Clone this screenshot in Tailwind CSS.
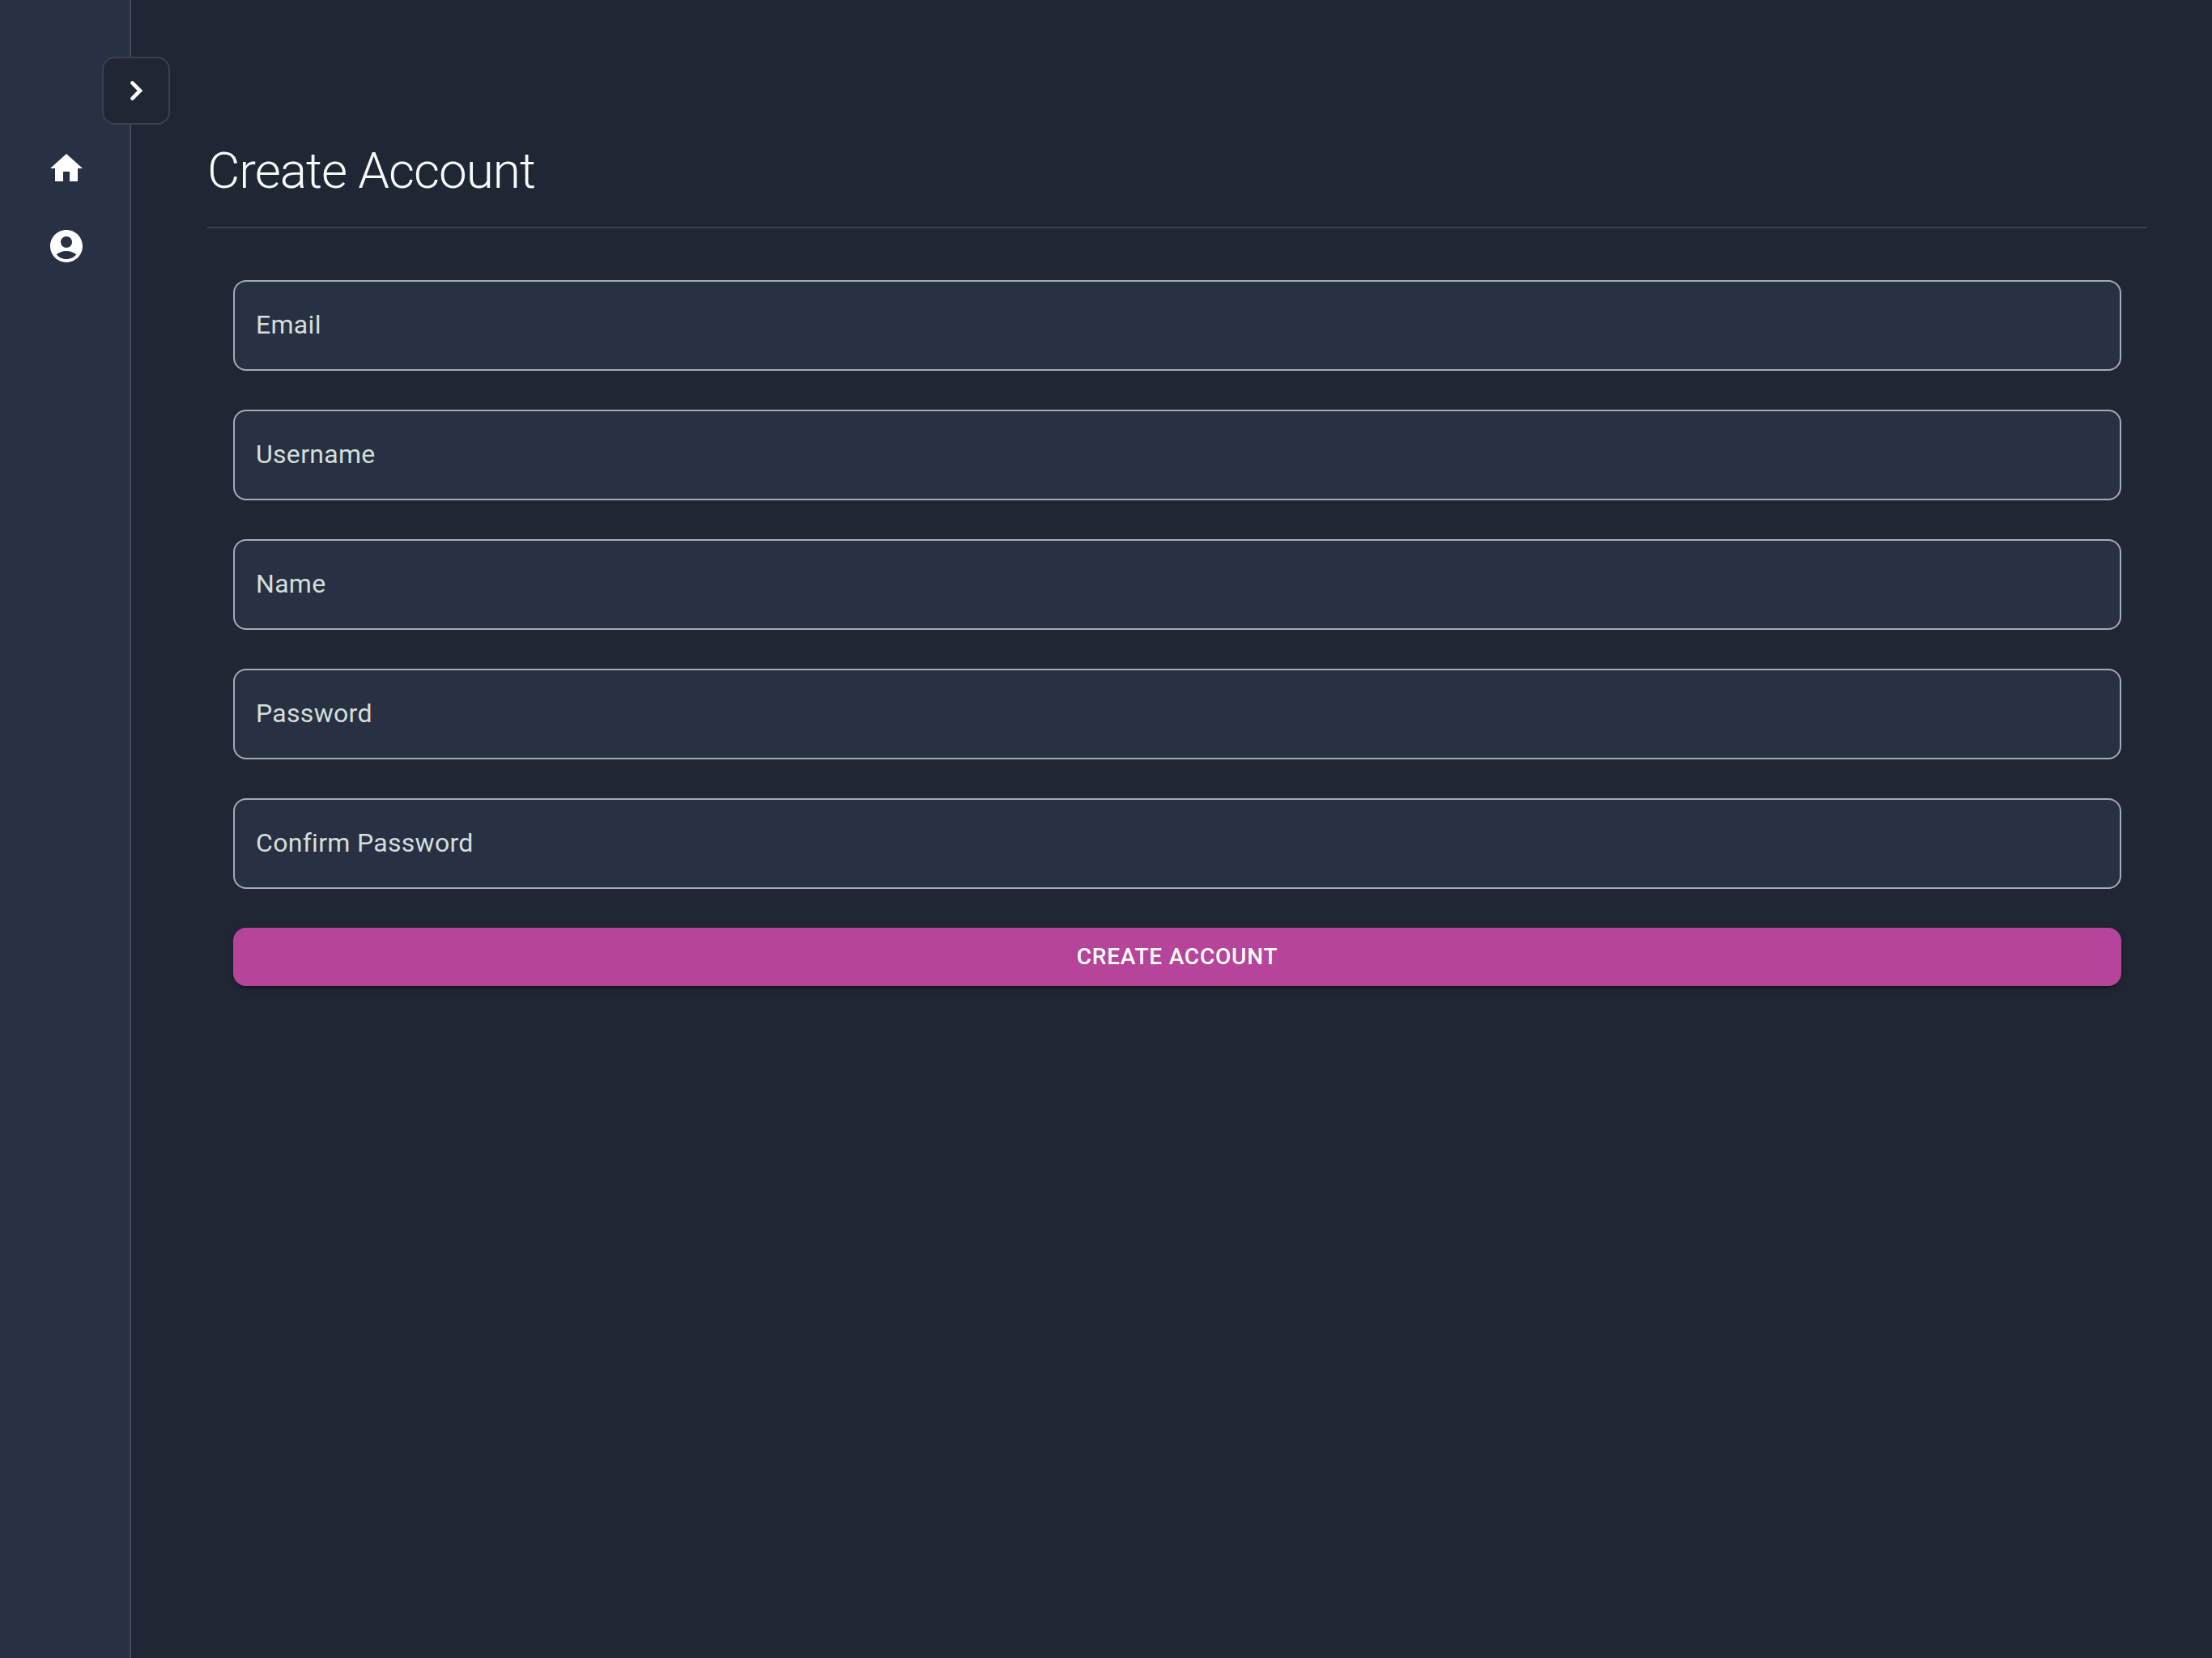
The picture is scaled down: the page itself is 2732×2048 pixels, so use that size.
<!DOCTYPE html>
<html lang="en">
<head>
<meta charset="utf-8">
<meta name="viewport" content="width=device-width, initial-scale=1">
<title>Create Account</title>
<script src="https://cdn.jsdelivr.net/npm/@tailwindcss/browser@4"></script>
</head>
<body class="flex min-h-screen bg-[#202734] font-[Roboto,sans-serif] text-white">
  <aside class="relative w-[162px] shrink-0 border-r-2 border-[#454b5b] bg-[#283044]">
    <button type="button" aria-label="Expand menu" class="absolute top-[70px] -right-[50px] flex size-[84px] items-center justify-center rounded-2xl border-2 border-[#3a404d] bg-[#202734]">
      <svg class="size-12" viewBox="0 0 24 24" fill="none" stroke="currentColor" stroke-width="2.3" stroke-linecap="round" stroke-linejoin="miter" aria-hidden="true"><path d="M9.7 7.200l4.800 4.800-4.800 4.800"/></svg>
    </button>
    <nav aria-label="Main" class="flex flex-col items-center gap-12 pt-[184px] pl-1">
      <a href="#home" aria-label="Home"><svg class="size-12" viewBox="0 0 24 24" fill="currentColor" aria-hidden="true"><path d="M10 20v-6h4v6h5v-8h3L12 3 2 12h3v8z"/></svg></a>
      <a href="#account" aria-label="Account"><svg class="size-12" viewBox="0 0 24 24" fill="currentColor" aria-hidden="true"><path d="M12 2C6.480 2 2 6.480 2 12s4.480 10 10 10 10-4.480 10-10S17.520 2 12 2zm0 4c1.930 0 3.500 1.570 3.500 3.500S13.930 13 12 13s-3.500-1.570-3.500-3.500S10.070 6 12 6zm0 14c-2.030 0-4.430-.82-6.140-2.880C7.550 15.800 9.680 15 12 15s4.450.8 6.140 2.120C16.430 19.180 14.030 20 12 20z"/></svg></a>
    </nav>
  </aside>
  <main class="min-w-0 flex-1 pt-[172px] pr-20 pl-[94px]">
    <h1 class="border-b-2 border-[#3a404d] pt-px pb-[31px] text-[62px] leading-[76px] font-light tracking-[-0.01562em] text-[#f8f9fa]">Create Account</h1>
    <form class="flex flex-col gap-12 px-8 pt-16">
      <div class="relative">
        <input id="email" type="email" placeholder=" " class="peer block h-28 w-full rounded-2xl border-2 border-[#a6abb3] bg-[#283044] px-7 text-[32px] outline-none focus:border-[#b5449a]">
        <label for="email" class="pointer-events-none absolute inset-y-0 left-7 flex items-center pb-0.5 text-[32px] tracking-[0.00938em] text-[#d3dfda] peer-[:not(:placeholder-shown)]:invisible">Email</label>
      </div>
      <div class="relative">
        <input id="username" type="text" placeholder=" " class="peer block h-28 w-full rounded-2xl border-2 border-[#a6abb3] bg-[#283044] px-7 text-[32px] outline-none focus:border-[#b5449a]">
        <label for="username" class="pointer-events-none absolute inset-y-0 left-7 flex items-center pb-0.5 text-[32px] tracking-[0.00938em] text-[#d3dfda] peer-[:not(:placeholder-shown)]:invisible">Username</label>
      </div>
      <div class="relative">
        <input id="name" type="text" placeholder=" " class="peer block h-28 w-full rounded-2xl border-2 border-[#a6abb3] bg-[#283044] px-7 text-[32px] outline-none focus:border-[#b5449a]">
        <label for="name" class="pointer-events-none absolute inset-y-0 left-7 flex items-center pb-0.5 text-[32px] tracking-[0.00938em] text-[#d3dfda] peer-[:not(:placeholder-shown)]:invisible">Name</label>
      </div>
      <div class="relative">
        <input id="password" type="password" placeholder=" " class="peer block h-28 w-full rounded-2xl border-2 border-[#a6abb3] bg-[#283044] px-7 text-[32px] outline-none focus:border-[#b5449a]">
        <label for="password" class="pointer-events-none absolute inset-y-0 left-7 flex items-center pb-0.5 text-[32px] tracking-[0.00938em] text-[#d3dfda] peer-[:not(:placeholder-shown)]:invisible">Password</label>
      </div>
      <div class="relative">
        <input id="confirm" type="password" placeholder=" " class="peer block h-28 w-full rounded-2xl border-2 border-[#a6abb3] bg-[#283044] px-7 text-[32px] outline-none focus:border-[#b5449a]">
        <label for="confirm" class="pointer-events-none absolute inset-y-0 left-7 flex items-center pb-0.5 text-[32px] tracking-[0.00938em] text-[#d3dfda] peer-[:not(:placeholder-shown)]:invisible">Confirm Password</label>
      </div>
      <button type="submit" class="h-[72px] rounded-2xl bg-[#b5449a] text-[28px] font-medium tracking-[0.02857em] uppercase shadow-[0_6px_2px_-4px_rgba(0,0,0,0.2),0_4px_4px_rgba(0,0,0,0.14),0_2px_10px_rgba(0,0,0,0.12)]">Create Account</button>
    </form>
  </main>
</body>
</html>
